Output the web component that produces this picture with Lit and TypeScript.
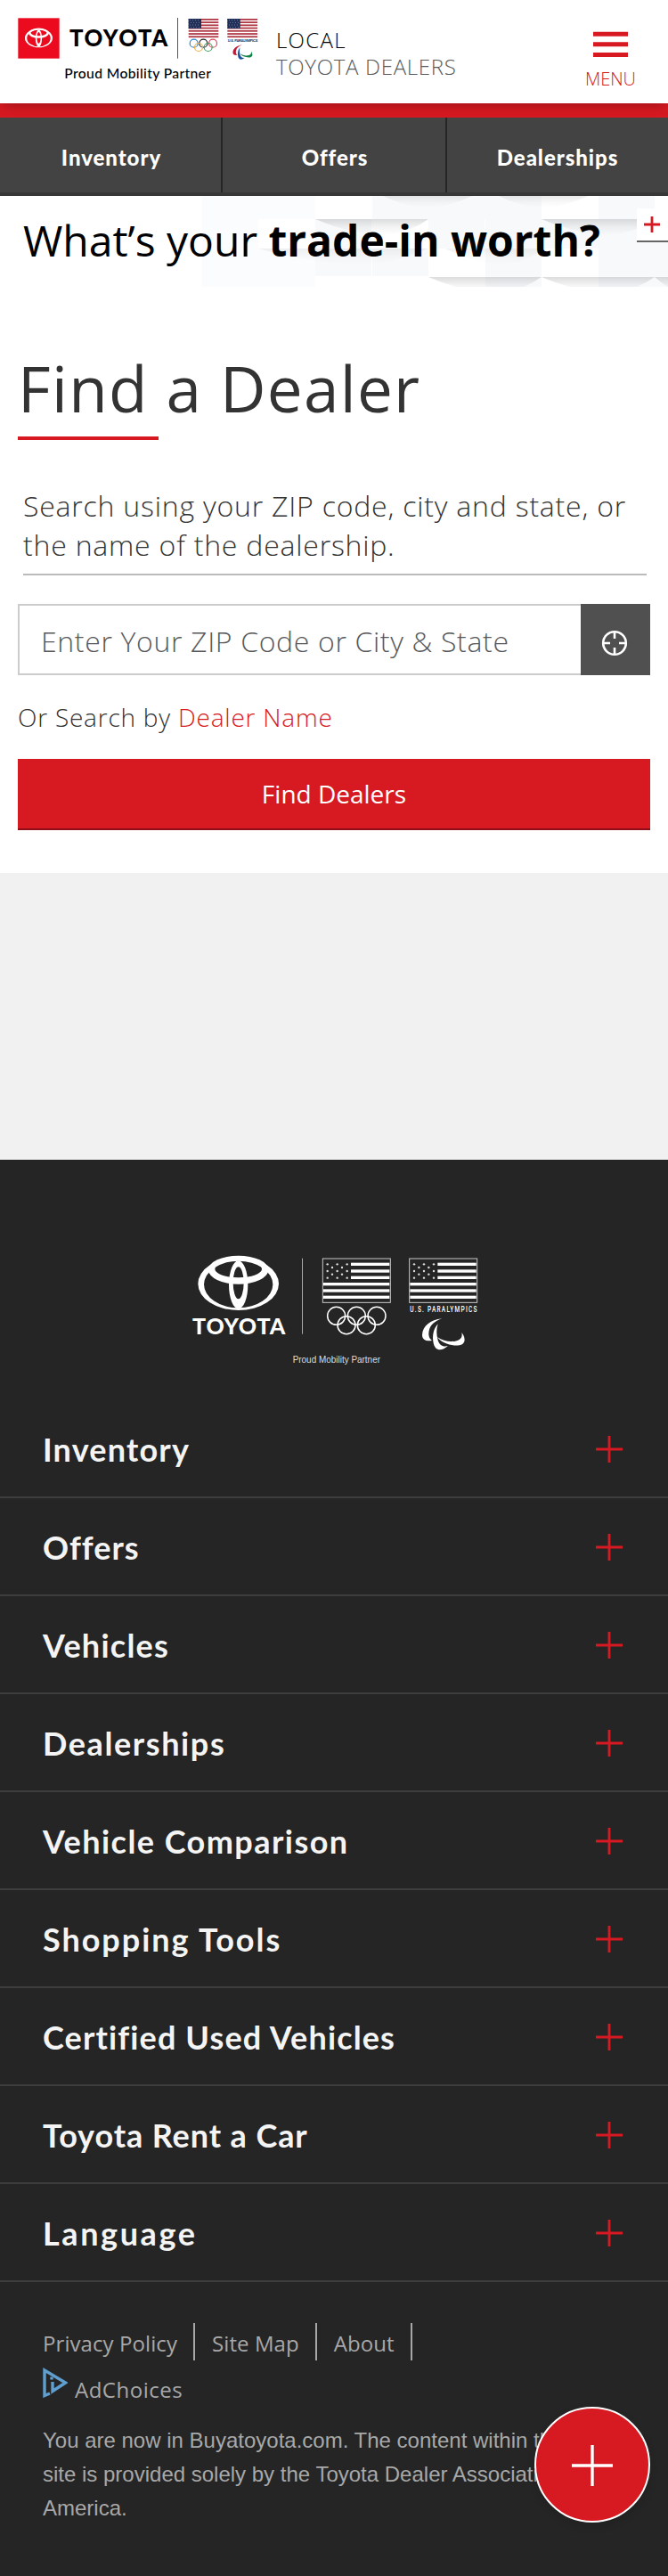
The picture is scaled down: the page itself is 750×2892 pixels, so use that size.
import { LitElement, html, svg, css } from "lit";
import { customElement } from "lit/decorators.js";
import { styleMap } from "lit/directives/style-map.js";

const emblem = svg`
  <g fill-rule="evenodd">
    <path d="M67 154a136 89 0 1 0 272 0a136 89 0 1 0 -272 0ZM87 156a116 79 0 1 0 232 0a116 79 0 1 0 -232 0Z" />
    <path d="M102 107a101 48 0 1 0 202 0a101 48 0 1 0 -202 0ZM124 104a79 29 0 1 0 158 0a79 29 0 1 0 -158 0Z" />
    <path d="M171 157a32 81 0 1 0 64 0a32 81 0 1 0 -64 0ZM185 151a18 54 0 1 0 36 0a18 54 0 1 0 -36 0Z" />
  </g>`;

const agitosPaths = [
  "M889 271C850 274 823 297 822 326C822 342 836 348 855 345C846 338 842 328 845 312C849 292 866 279 889 271Z",
  "M875 289C860 305 855 330 860 353C865 379 886 383 909 363C892 368 880 360 875 344C870 325 869 308 875 289Z",
  "M873 333C887 354 921 364 947 361C968 357 970 337 955 318C959 335 950 344 933 347C912 350 890 345 873 333Z",
];

const flagStars = [0, 1, 2].flatMap((r) => [0, 1, 2].map((c) => [503 + c * 33, 88 + r * 23]))
  .concat([0, 1].flatMap((r) => [0, 1].map((c) => [519 + c * 33, 99 + r * 23])));

const monoFlag = (dx: number) => svg`
  <g transform="translate(${dx} 0)">
    <rect x="487" y="69" width="228" height="148" fill="none" stroke="#fff" stroke-opacity=".75" stroke-width="3" />
    ${[83, 106, 128].map((y) => svg`<rect x="582" y=${y} width="130" height="10" />`)}
    ${[150, 172, 194].map((y) => svg`<rect x="489" y=${y} width="223" height="10" />`)}
    ${flagStars.map(([x, y]) => svg`<circle cx=${x} cy=${y} r="3.6" fill="#ddd" />`)}
  </g>`;

const colorFlag = (dx: number) => svg`
  <g transform="translate(${dx} 0)">
    <rect x="635" y="63" width="101" height="63" fill="#fff" />
    ${[0, 1, 2, 3, 4, 5, 6].map((i) => svg`<rect x="635" y=${63 + i * 9.7} width="101" height="5.2" fill="#ad3340" />`)}
    <rect x="635" y="63" width="43" height="33" fill="#1f2f57" />
    ${[0, 1, 2, 3].flatMap((r) => [0, 1, 2, 3].map((c) => svg`<circle cx=${641 + c * 9 + (r % 2) * 3} cy=${68 + r * 8} r="1.4" fill="#b9c1d6" />`))}
  </g>`;

const plus = (cls: string) => html`
  <svg class=${cls} viewBox="0 0 30 30"><path d="M15 0V30M0 15H30" /></svg>`;

@customElement("footer-row")
export class FooterRow extends LitElement {
  static properties = { label: {}, tracking: { type: Number } };
  declare label: string;
  declare tracking: number;
  static styles = css`
    :host {
      display: flex;
      justify-content: space-between;
      align-items: center;
      box-sizing: border-box;
      height: 110px;
      padding: 0 51px 0 48px;
      border-bottom: 2px solid #3e3e3e;
    }
    .label {
      padding-top: 2px;
      font: 700 36px/104px Lato, sans-serif;
      font-feature-settings: "liga" 0;
      color: #f4f4f4;
    }
    .plus {
      width: 30px;
      height: 30px;
      margin-top: 2px;
      fill: none;
      stroke: #d71921;
      stroke-width: 2.8;
    }
  `;
  render() {
    return html`<span class="label" style=${styleMap({ letterSpacing: `${this.tracking}px` })}>${this.label}</span>${plus("plus")}`;
  }
}

@customElement("app-root")
export class AppRoot extends LitElement {
  static styles = css`
    :host {
      display: block;
      position: relative;
      background: #fff;
      font-family: "Open Sans", sans-serif;
      color: #333;
      font-feature-settings: "liga" 0;
    }
    .top {
      position: relative;
      z-index: 1;
      display: flex;
      align-items: flex-start;
      height: 116px;
      box-sizing: border-box;
      padding: 20px 36px 0 20px;
      background: #fff;
      box-shadow: 0 5px 12px -3px rgba(0, 0, 0, 0.28);
    }
    .brand { display: block; width: 270px; height: 74px; }
    .tag {
      margin: 10px 0 0 20px;
      font-size: 24px;
      line-height: 30px;
      font-weight: 300;
      letter-spacing: 0.7px;
      color: #58595b;
      white-space: nowrap;
    }
    .tag b { display: block; font-weight: 300; color: #000; letter-spacing: 1.3px; }
    .menu {
      margin: 15px 0 0 auto;
      display: flex;
      flex-direction: column;
      align-items: center;
      color: #d71921;
      font-size: 20px;
      line-height: 25px;
      font-weight: 350;
    }
    .bars { display: block; width: 39px; height: 29px; margin-bottom: 12px; fill: #d71921; }
    .stripe { height: 16px; background: #d71921; }
    .nav {
      display: grid;
      grid-template-columns: 250px 252px 248px;
      height: 88px;
      box-sizing: border-box;
      background: #434343;
      text-align: center;
      font-family: Lato, sans-serif;
    }
    .nav a {
      border-bottom: 4px solid #373737;
      box-shadow: inset -2px 0 #262626;
      font-size: 24px;
      line-height: 89px;
      height: 84px;
      font-weight: 900;
      letter-spacing: 0.95px;
      color: #fff;
    }
    .nav a:last-child { box-shadow: none; }
    .banner { position: relative; height: 102px; }
    .tiles { position: absolute; inset: 0; width: 750px; height: 102px; }
    .pitch {
      position: relative;
      margin: 0;
      padding: 20px 0 0 26px;
      font-size: 48px;
      line-height: 60px;
      font-weight: 380;
      color: #000;
      white-space: nowrap;
    }
    .pitch b { font-weight: 670; letter-spacing: 0; }
    .expand {
      position: absolute;
      top: 14px;
      right: 0;
      display: grid;
      place-items: center;
      width: 35px;
      height: 36px;
      background: #fff;
      border-bottom: 2px solid #666;
    }
    .small-plus { width: 18px; height: 18px; margin-left: -2px; fill: none; stroke: #d71921; stroke-width: 4.6; }
    .finder { padding: 74px 20px 48px; }
    .title { margin: 0; font-size: 71px; line-height: 80px; font-weight: 450; letter-spacing: 1.3px; }
    .rule { width: 158px; height: 4px; margin-top: 14px; background: #d71921; }
    .hint {
      margin: 52px 4px 0 6px;
      padding-bottom: 10px;
      border-bottom: 2px solid #bbb;
      font-size: 32px;
      line-height: 44px;
      font-weight: 300;
      letter-spacing: 0.79px;
      white-space: nowrap;
    }
    .field { display: flex; height: 80px; margin-top: 32px; }
    .input {
      flex: 1;
      border: 2px solid #ccc;
      border-right: 0;
      padding-left: 24px;
      font-size: 32px;
      line-height: 79px;
      font-weight: 360;
      letter-spacing: 0.65px;
      color: #58595b;
      box-sizing: border-box;
      white-space: nowrap;
    }
    .locate { display: grid; place-items: center; width: 78px; background: #505050; }
    .locate svg { width: 30px; height: 30px; margin: 8px 3px 0 0; fill: none; stroke: #fff; stroke-width: 2.6; }
    .alt { margin: 27px 0; font-size: 28px; line-height: 40px; font-weight: 300; letter-spacing: 0.78px; }
    .alt a { color: #d71921; }
    .submit {
      box-sizing: border-box;
      height: 80px;
      border-bottom: 2px solid #8f0d18;
      background: #d71921;
      color: #fff;
      font-size: 28px;
      line-height: 78px;
      font-weight: 530;
      letter-spacing: 0;
      text-align: center;
    }
    .map { height: 322px; background: #f1f1f1; }
    .footer { height: 1590px; box-sizing: border-box; padding-top: 88px; background: #252525; }
    .partner { display: block; width: 360px; height: 160px; margin: 0 0 22px 200px; }
    .legal { padding: 46px 24px 0 48px; color: #a8a8a8; }
    .links { display: flex; height: 42px; font-size: 24px; line-height: 46px; font-weight: 370; letter-spacing: 0.08px; }
    .links a { border-right: 2px solid #a8a8a8; padding-right: 18px; margin-right: 19px; }
    .choices { display: flex; gap: 8px; height: 46px; font-size: 24px; font-weight: 370; letter-spacing: 0.5px; }
    .choices svg { width: 28px; height: 34px; margin-top: 8px; }
    .choices span { line-height: 66px; }
    .note {
      margin: 25px 0 0;
      font: 24px/38px "Liberation Sans", Arial, sans-serif;
      white-space: nowrap;
    }
    .fab {
      position: absolute;
      right: 20px;
      bottom: 60px;
      display: grid;
      place-items: center;
      width: 126px;
      height: 126px;
      border: 2px solid #fff;
      border-radius: 50%;
      background: #d71921;
      box-shadow: 0 4px 10px rgba(0, 0, 0, 0.12);
    }
    .fab-plus { width: 46px; height: 46px; margin-top: 2px; fill: none; stroke: #fff; stroke-width: 2.2; }
  `;

  private headerLogo() {
    return html`
      <svg class="brand" viewBox="60 60 810 222">
        <rect x="61" y="61" width="139" height="136" fill="#eb0a1e" />
        <g fill="#fff" transform="translate(61 73.5) scale(.342 .355)">${emblem}</g>
        <text x="234" y="156" font-family="Lato" font-weight="900" font-size="77" textLength="331">TOYOTA</text>
        <rect x="597" y="60" width="3" height="137" fill="#555" />
        ${colorFlag(0)}${colorFlag(131)}
        <g fill="none" stroke-width="3.6">
          <circle cx="653" cy="146" r="13.5" stroke="#2f86cc" />
          <circle cx="685" cy="146" r="13.5" stroke="#222" />
          <circle cx="717" cy="146" r="13.5" stroke="#dd4a5b" />
          <circle cx="669" cy="159" r="13.5" stroke="#eeb04a" />
          <circle cx="701" cy="159" r="13.5" stroke="#3fa164" />
        </g>
        <text x="767" y="140" font-family="Roboto" font-weight="700" font-size="13" textLength="101" fill="#26365e">U.S. PARALYMPICS</text>
        <g transform="translate(404.5 26.5) scale(.462)">
          <path d=${agitosPaths[0]} fill="#b5203b" />
          <path d=${agitosPaths[1]} fill="#1d4fa0" />
          <path d=${agitosPaths[2]} fill="#14834a" />
        </g>
        <text x="217" y="263" font-family="Lato" font-weight="500" font-size="47" textLength="494">Proud Mobility Partner</text>
      </svg>`;
  }

  private footerLogo() {
    return html`
      <svg class="partner" viewBox="0 0 1080 480" fill="#fff">
        ${emblem}
        <text x="48" y="323" font-family="Lato" font-weight="900" font-size="75" textLength="313">TOYOTA</text>
        <rect x="417" y="68" width="3" height="255" fill="#aaa" />
        ${monoFlag(0)}${monoFlag(292)}
        <g fill="none" stroke="#fff" stroke-width="4.5">
          <circle cx="533" cy="262" r="30" /><circle cx="601" cy="262" r="30" /><circle cx="669" cy="262" r="30" />
          <circle cx="567" cy="293" r="30" /><circle cx="634" cy="293" r="30" />
        </g>
        <text transform="translate(781 248) scale(.7 1)" font-family="Roboto" font-weight="500" font-size="28" textLength="322">U.S. PARALYMPICS</text>
        ${agitosPaths.map((d) => svg`<path d=${d} />`)}
        <text x="386" y="419" font-family="Liberation Sans" font-size="31" textLength="295" lengthAdjust="spacingAndGlyphs" fill="#ddd">Proud Mobility Partner</text>
      </svg>`;
  }

  private tiles() {
    const tint = [[227, 0, 127, 102], [418, 0, 190, 26], [672, 0, 63, 26], [354, 26, 63, 64], [418, 59, 63, 31],
      [481, 26, 63, 33], [545, 26, 63, 76], [672, 26, 63, 76], [608, 26, 64, 33], [735, 26, 15, 76]];
    const white = [[290, 26, 64, 33], [418, 26, 63, 33], [481, 59, 64, 31], [608, 59, 64, 31]];
    const shade = [[354, 26, 127], [608, 26, 127], [290, 59, 190], [500, 59, 110], [481, 91, 127], [608, 91, 127], [735, 91, 60]];
    return html`
      <svg class="tiles" viewBox="0 0 750 102">
        <defs>
          <linearGradient id="fade" x2="0" y2="1">
            <stop offset="0" stop-color="#8b8d90" stop-opacity=".3" />
            <stop offset=".5" stop-color="#8b8d90" stop-opacity=".1" />
            <stop offset="1" stop-color="#8b8d90" stop-opacity="0" />
          </linearGradient>
        </defs>
        ${tint.map(([x, y, w, h]) => svg`<rect x=${x} y=${y} width=${w} height=${h} fill=${x < 300 ? "#fbfcfd" : "#f7f9fb"} />`)}
        ${white.map(([x, y, w, h]) => svg`<rect x=${x} y=${y} width=${w} height=${h} fill="#fff" />`)}
        ${shade.map(([x, y, w]) => svg`<path d="M${x} ${y}H${x + w}Q${x + w * 0.8} ${y + 18} ${x + w * 0.55} ${y + 18}Q${x + w * 0.25} ${y + 14} ${x} ${y}Z" fill="url(#fade)" opacity=${y === 59 ? 0.4 : 1} />`)}
        <path d="M430 0H530Q500 14 475 13Q450 10 430 0ZM560 0H660Q630 14 605 13Q580 10 560 0Z" fill="url(#fade)" opacity=".6" />
      </svg>`;
  }

  render() {
    const rows: [string, number][] = [["Inventory", 1.2], ["Offers", 1], ["Vehicles", 1.25], ["Dealerships", 1.6],
      ["Vehicle Comparison", 1.45], ["Shopping Tools", 1.95], ["Certified Used Vehicles", 1.13], ["Toyota Rent a Car", 0.9], ["Language", 2.6]];
    return html`
      <header class="top">
        ${this.headerLogo()}
        <div class="tag"><b>LOCAL</b>TOYOTA DEALERS</div>
        <div class="menu">
          <svg class="bars" viewBox="0 0 39 29"><path d="M0 .7H39V5.7H0ZM0 12.3H39V17.3H0ZM0 23.9H39V28.9H0Z" /></svg>
          MENU
        </div>
      </header>
      <div class="stripe"></div>
      <nav class="nav"><a>Inventory</a><a>Offers</a><a>Dealerships</a></nav>
      <div class="banner">
        ${this.tiles()}
        <p class="pitch">What’s your <b>trade-in worth?</b></p>
        <div class="expand">${plus("small-plus")}</div>
      </div>
      <section class="finder">
        <h1 class="title">Find a Dealer</h1>
        <div class="rule"></div>
        <div class="hint">Search using your ZIP code, city and state, or<br />the name of the dealership.</div>
        <div class="field">
          <div class="input">Enter Your ZIP Code or City &amp; State</div>
          <div class="locate">
            <svg viewBox="0 0 30 30"><circle cx="15" cy="15" r="12.8" /><path d="M15 2V10M15 20V28M2 15H10M20 15H28" /></svg>
          </div>
        </div>
        <div class="alt">Or Search by <a>Dealer Name</a></div>
        <div class="submit">Find Dealers</div>
      </section>
      <div class="map"></div>
      <footer class="footer">
        ${this.footerLogo()}
        ${rows.map(([label, t]) => html`<footer-row .label=${label} .tracking=${t}></footer-row>`)}
        <div class="legal">
          <div class="links"><a>Privacy Policy</a><a>Site Map</a><a>About</a></div>
          <div class="choices">
            <svg viewBox="0 0 28 34" fill="none" stroke="#5f9fcf" stroke-width="3.4">
              <path d="M8 29L2 31.5V3L25.500 17L11 26.500V16" />
              <path d="M10 10.500V13.500" />
            </svg>
            <span>AdChoices</span>
          </div>
          <p class="note">You are now in Buyatoyota.com. The content within this<br />site is provided solely by the Toyota Dealer Association of<br />America.</p>
        </div>
      </footer>
      <div class="fab">${plus("fab-plus")}</div>
    `;
  }
}
